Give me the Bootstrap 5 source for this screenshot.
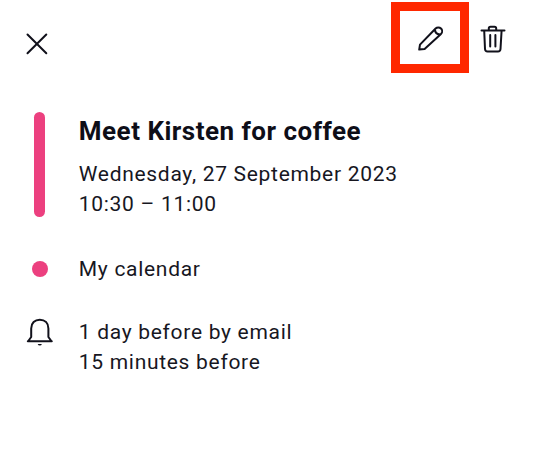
<!DOCTYPE html>
<html lang="en">
<head>
<meta charset="utf-8">
<meta name="viewport" content="width=device-width, initial-scale=1">
<title>Event details</title>
<link href="https://cdn.jsdelivr.net/npm/bootstrap@5.3.0/dist/css/bootstrap.min.css" rel="stylesheet">
<style>
  body { font-family: Roboto, "Liberation Sans", sans-serif; font-size: 21px; line-height: 30px; letter-spacing: .7px; color: #17171f; background: #fff; }
  svg { display: block; fill: none; stroke: #11111b; stroke-width: 2; stroke-linecap: round; stroke-linejoin: round; }
  .topbar { height: 112px; padding: 2px 34px 0 26px; }
  .close-btn { margin-top: 31px; }
  .edit-btn { width: 78px; height: 71px; border: 9px solid #ff2800; }
  .trash-btn { margin: 22px 0 0 11px; }
  .details { padding-left: 26px; }
  .marker { width: 28px; margin-right: 24.8px; }
  .stripe { width: 11px; height: 105px; margin-right: 1px; background: #ec407f; }
  .dot { width: 16px; height: 16px; background: #ec407f; }
  .event-title { font-size: 26px; line-height: 30px; letter-spacing: .5px; color: #0e0e18; padding-top: 4px; margin-bottom: 13px; }
  .calendar-row { margin-top: 35px; }
  .reminder-row { margin-top: 33px; }
</style>
</head>
<body>
<header class="topbar d-flex justify-content-between align-items-start">
  <button class="close-btn btn p-0 border-0" type="button" aria-label="Close">
    <svg width="22" height="22" viewBox="0 0 22 22"><path d="M1.5 1.5 20.3 20.3M20.3 1.5 1.5 20.3"/></svg>
  </button>
  <div class="d-flex align-items-start">
    <button class="edit-btn btn p-0 rounded-0 d-flex align-items-center justify-content-center" type="button" aria-label="Edit">
      <svg width="26" height="26" viewBox="0 0 26 26"><path d="M2.2 24.6 3 19.6 18.6 3.5A3.8 3.8 0 0 1 24 8.9L7.6 23.9ZM18 4.2Q17.9 9 22.9 9.5"/></svg>
    </button>
    <button class="trash-btn btn p-0 border-0" type="button" aria-label="Delete">
      <svg width="26" height="30" viewBox="0 0 26 30"><path d="M1.5 6.5H24.5M8.8 6V4.5Q8.8 2.8 10.5 2.8H14.5Q16.2 2.8 16.2 4.5V6M4.2 6.5 5 25Q5.2 27.5 7.5 27.5H18Q20.3 27.5 20.5 25L21.6 6.5M10.2 11V22.5M15.4 11V22.5"/></svg>
    </button>
  </div>
</header>
<main class="details">
  <section class="d-flex">
    <div class="marker d-flex justify-content-center"><div class="stripe rounded-pill"></div></div>
    <div>
      <h1 class="event-title fw-bold">Meet Kirsten for coffee</h1>
      <div>Wednesday, 27 September 2023</div>
      <div>10:30 – 11:00</div>
    </div>
  </section>
  <section class="calendar-row d-flex align-items-center">
    <div class="marker d-flex justify-content-center"><div class="dot rounded-circle"></div></div>
    <div>My calendar</div>
  </section>
  <section class="reminder-row d-flex">
    <div class="marker d-flex justify-content-center">
      <svg width="28" height="30" viewBox="0 0 28 30"><path d="M1.8 24.2H25.8M2.3 24 5.2 20V11.5C5.2 6 8.8 2.8 13.8 2.8S22.4 6 22.4 11.5V20L25.3 24"/><path d="M11.7 27H15.9Q15.4 28.6 13.8 28.6T11.7 27Z" fill="#11111b" stroke="none"/></svg>
    </div>
    <div>
      <div>1 day before by email</div>
      <div>15 minutes before</div>
    </div>
  </section>
</main>
<script src="https://cdn.jsdelivr.net/npm/bootstrap@5.3.0/dist/js/bootstrap.bundle.min.js"></script>
</body>
</html>
